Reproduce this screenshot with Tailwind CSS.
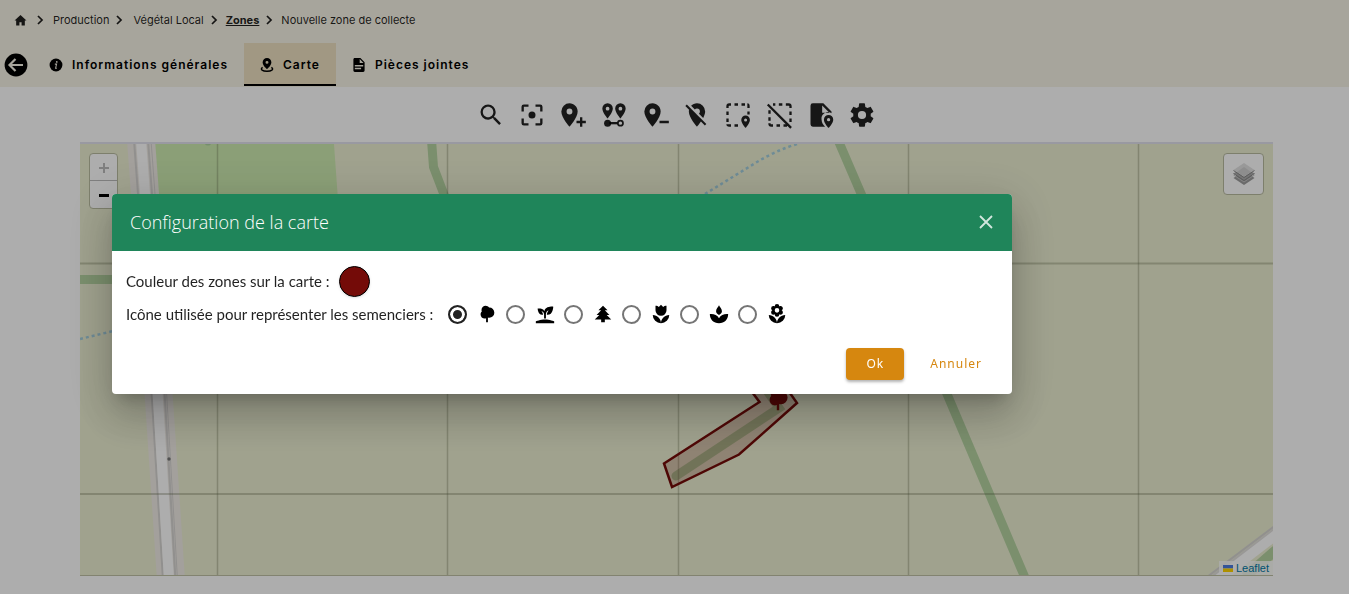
<!DOCTYPE html>
<html lang="fr">
<head>
    <meta charset="UTF-8">
    <meta name="viewport" content="width=device-width, initial-scale=1.0">
    <title>Nouvelle zone de collecte</title>
    <script src="https://cdn.jsdelivr.net/npm/@tailwindcss/browser@4"></script>
</head>
<body class="bg-white min-h-screen flex flex-col font-['Inter',sans-serif] text-black">

<header class="bg-[#f7f3e6] h-[87px]">
    <nav aria-label="Fil d'Ariane" class="h-10 pl-[14px] flex items-center text-[11px] text-black/87">
        <a href="#" aria-label="Accueil">
            <svg class="w-[13px] h-[13px]" viewBox="0 0 24 24" fill="currentColor"><path d="M10,21V15H14V21H20V12H23L12,2L1,12H4V21H10Z"/></svg>
        </a>
        <svg class="w-3 h-3 mx-[7px]" viewBox="0 0 24 24" fill="none" stroke="currentColor" stroke-width="3.5"><path d="M8 4L16 12L8 20"/></svg>
        <a href="#">Production</a>
        <svg class="w-3 h-3 mx-1" viewBox="0 0 24 24" fill="none" stroke="currentColor" stroke-width="3.5"><path d="M8 4L16 12L8 20"/></svg>
        <a href="#" class="ml-1">Végétal Local</a>
        <svg class="w-3 h-3 mx-1" viewBox="0 0 24 24" fill="none" stroke="currentColor" stroke-width="3.5"><path d="M8 4L16 12L8 20"/></svg>
        <a href="#" class="ml-[2px] font-bold underline">Zones</a>
        <svg class="w-3 h-3 mx-1" viewBox="0 0 24 24" fill="none" stroke="currentColor" stroke-width="3.5"><path d="M8 4L16 12L8 20"/></svg>
        <span class="ml-[2px]">Nouvelle zone de collecte</span>
    </nav>

    <div class="mt-[3px] h-[43px] flex items-stretch text-[12px] font-semibold tracking-[1px]">
        <button type="button" aria-label="Retour" class="ml-1 mr-[5px]">
            <svg class="w-6 h-6" viewBox="0 0 24 24"><circle cx="12" cy="12" r="11.4"/><path d="M19 12H6M11.500 6L5.500 12L11.500 18" fill="none" stroke="#f7f3e6" stroke-width="2.200"/></svg>
        </button>
        <a href="#" class="px-4 flex items-center gap-[9px]">
            <svg class="w-[14px] h-[14px]" viewBox="0 0 24 24"><circle cx="12" cy="12" r="11"/><path d="M10 10.500H13L11.300 17.500H13.500" fill="none" stroke="#f7f3e6" stroke-width="1.800"/><circle cx="13.300" cy="6.700" r="1.500" fill="#f7f3e6"/></svg>
            Informations générales
        </a>
        <a href="#" class="px-4 pt-[2px] flex items-center gap-[9px] bg-[#ede0c1] border-b-2 border-black">
            <svg class="w-[14px] h-[14px]" viewBox="0 0 24 24"><path fill-rule="evenodd" d="M12 0A7.500 7.500 0 0 1 19.500 7.500C19.500 12.500 12 19 12 19S4.500 12.500 4.500 7.500A7.500 7.500 0 0 1 12 0ZM12 5A2.500 2.500 0 0 0 12 10A2.500 2.500 0 0 0 12 5Z"/><path d="M4.500 16C-1 20 5 22.700 12 22.700S25 20 19.500 16" fill="none" stroke="#000" stroke-width="2.400"/></svg>
            Carte
        </a>
        <a href="#" class="px-4 flex items-center gap-[9px]">
            <svg class="w-[14px] h-[14px]" viewBox="2 2 20 20"><path d="M13,9H18.5L13,3.5V9M6,2H14L20,8V20A2,2 0 0,1 18,22H6C4.89,22 4,21.1 4,20V4C4,2.89 4.89,2 6,2M15,18V16H6V18H15M18,14V12H6V14H18Z"/></svg>
            Pièces jointes
        </a>
    </div>
</header>

<main class="flex-1 flex flex-col pl-20 pr-[76px] pb-[18px]">
    <!-- barre d'outils de la carte -->
    <div class="h-[55px] mx-auto w-[400px] flex items-center justify-between text-black/87">
        <button type="button" aria-label="Rechercher"><svg class="w-7 h-7" viewBox="0 0 24 24" fill="currentColor"><path d="M9.5,3A6.5,6.5 0 0,1 16,9.5C16,11.11 15.41,12.59 14.44,13.73L14.71,14H15.5L20.5,19L19,20.5L14,15.5V14.71L13.73,14.44C12.59,15.41 11.11,16 9.5,16A6.5,6.5 0 0,1 3,9.5A6.5,6.5 0 0,1 9.5,3M9.5,5C7,5 5,7 5,9.5C5,12 7,14 9.5,14C12,14 14,12 14,9.5C14,7 12,5 9.5,5Z"/></svg></button>
        <button type="button" aria-label="Centrer"><svg class="w-7 h-7" viewBox="0 0 24 24" fill="currentColor"><path d="M12,9A3,3 0 0,0 9,12A3,3 0 0,0 12,15A3,3 0 0,0 15,12A3,3 0 0,0 12,9M19,19H15V21H19A2,2 0 0,0 21,19V15H19M19,3H15V5H19V9H21V5A2,2 0 0,0 19,3M5,5H9V3H5A2,2 0 0,0 3,5V9H5M5,15H3V19A2,2 0 0,0 5,21H9V19H5V15Z"/></svg></button>
        <button type="button" aria-label="Ajouter un point"><svg class="w-7 h-7" viewBox="0 0 24 24" fill="currentColor"><path d="M9,11.5A2.5,2.5 0 0,0 11.5,9A2.5,2.5 0 0,0 9,6.5A2.5,2.5 0 0,0 6.5,9A2.5,2.5 0 0,0 9,11.5M9,2C12.86,2 16,5.13 16,9C16,14.25 9,22 9,22C9,22 2,14.25 2,9A7,7 0 0,1 9,2M15,17H18V14H20V17H23V19H20V22H18V19H15V17Z"/></svg></button>
        <button type="button" aria-label="Relier les points">
            <svg class="w-7 h-7" viewBox="0 0 24 24" fill="currentColor">
                <path fill-rule="evenodd" d="M6.500 2A4.500 4.500 0 0 1 11 6.500C11 10 6.500 15 6.500 15S2 10 2 6.500A4.500 4.500 0 0 1 6.500 2ZM6.500 5A1.600 1.600 0 0 0 6.500 8.200A1.600 1.600 0 0 0 6.500 5ZM17.500 2A4.500 4.500 0 0 1 22 6.500C22 10 17.500 15 17.500 15S13 10 13 6.500A4.500 4.500 0 0 1 17.500 2ZM17.500 5A1.600 1.600 0 0 0 17.500 8.200A1.600 1.600 0 0 0 17.500 5Z"/>
                <circle cx="6.500" cy="19" r="3"/><path d="M8 18H15V20H8Z"/><circle cx="17.500" cy="19" r="2.200" fill="none" stroke="currentColor" stroke-width="1.500"/>
            </svg>
        </button>
        <button type="button" aria-label="Supprimer un point"><svg class="w-7 h-7" viewBox="0 0 24 24" fill="currentColor"><path d="M9,11.5A2.5,2.5 0 0,0 11.5,9A2.5,2.5 0 0,0 9,6.5A2.5,2.5 0 0,0 6.5,9A2.5,2.5 0 0,0 9,11.5M9,2C12.86,2 16,5.13 16,9C16,14.25 9,22 9,22C9,22 2,14.25 2,9A7,7 0 0,1 9,2M15,17H23V19H15V17Z"/></svg></button>
        <button type="button" aria-label="Masquer les points"><svg class="w-7 h-7" viewBox="0 0 24 24" fill="currentColor"><path d="M16.37,16.1L11.75,11.47L11.64,11.36L3.27,3L2,4.27L5.18,7.45C5.06,7.95 5,8.46 5,9C5,14.25 12,22 12,22C12,22 13.67,20.15 15.37,17.65L18.73,21L20,19.72M12,6.5A2.5,2.5 0 0,1 14.5,9C14.5,9.73 14.17,10.39 13.67,10.85L17.3,14.5C18.28,12.62 19,10.68 19,9A7,7 0 0,0 12,2C10,2 8.24,2.82 6.96,4.14L10.15,7.33C10.61,6.82 11.26,6.5 12,6.5Z"/></svg></button>
        <button type="button" aria-label="Tracer une zone">
            <svg class="w-7 h-7" viewBox="0 0 24 24" fill="currentColor">
                <path d="M3 6V4.500Q3 3 4.500 3H6M9 3H12M15 3H18M20 3Q21 3 21 4.500V6M21 9V11.500M3 9V12M3 15V18M3 20Q3 21 4.500 21H6M9 21H12" fill="none" stroke="currentColor" stroke-width="2"/>
                <path fill-rule="evenodd" d="M18.500 12.500A3.700 3.700 0 0 1 22.200 16.200C22.200 19 18.500 23 18.500 23S14.800 19 14.800 16.200A3.700 3.700 0 0 1 18.500 12.500ZM18.500 14.900A1.300 1.300 0 0 0 18.500 17.500A1.300 1.300 0 0 0 18.500 14.900Z"/>
            </svg>
        </button>
        <button type="button" aria-label="Effacer la zone">
            <svg class="w-7 h-7" viewBox="0 0 24 24" fill="none" stroke="currentColor" stroke-width="2">
                <path d="M6 3H8M11 3H14M17 3H19.500Q21 3 21 4.500V6M21 9V12M21 15V18M3 8V11M3 14V17M3 19V19.500Q3 21 4.500 21H6M9 21H12M15 21H18M1.500 3L21.500 23"/>
            </svg>
        </button>
        <button type="button" aria-label="Importer un fichier">
            <svg class="w-7 h-7" viewBox="0 0 24 24" fill="currentColor">
                <path fill-rule="evenodd" d="M5 2H14L21 9V10.500A5.500 5.500 0 0 0 12.500 16C12.500 18.500 14 20.500 15.500 22H5A2 2 0 0 1 3 20V4A2 2 0 0 1 5 2ZM13 3.800V10H19.200Z"/>
                <path fill-rule="evenodd" d="M18.500 12A4 4 0 0 1 22.500 16C22.500 19 18.500 23 18.500 23S14.500 19 14.500 16A4 4 0 0 1 18.500 12ZM18.500 14.600A1.400 1.400 0 0 0 18.500 17.400A1.400 1.400 0 0 0 18.500 14.600Z"/>
            </svg>
        </button>
        <button type="button" aria-label="Configuration"><svg class="w-7 h-7" viewBox="0 0 24 24" fill="currentColor"><path d="M12,15.5A3.5,3.5 0 0,1 8.5,12A3.5,3.5 0 0,1 12,8.5A3.5,3.5 0 0,1 15.5,12A3.5,3.5 0 0,1 12,15.5M19.43,12.97C19.47,12.65 19.5,12.33 19.5,12C19.5,11.67 19.47,11.34 19.43,11L21.54,9.37C21.73,9.22 21.78,8.95 21.66,8.73L19.66,5.27C19.54,5.05 19.27,4.96 19.05,5.05L16.56,6.05C16.04,5.66 15.5,5.32 14.87,5.07L14.5,2.42C14.46,2.18 14.25,2 14,2H10C9.75,2 9.54,2.18 9.5,2.42L9.13,5.07C8.5,5.32 7.96,5.66 7.44,6.05L4.95,5.05C4.73,4.96 4.46,5.05 4.34,5.27L2.34,8.73C2.21,8.95 2.27,9.22 2.46,9.37L4.57,11C4.53,11.34 4.5,11.67 4.5,12C4.5,12.33 4.53,12.65 4.57,12.97L2.46,14.63C2.27,14.78 2.21,15.05 2.34,15.27L4.34,18.73C4.46,18.95 4.73,19.03 4.95,18.95L7.44,17.94C7.96,18.34 8.5,18.68 9.13,18.93L9.5,21.58C9.54,21.82 9.75,22 10,22H14C14.25,22 14.46,21.82 14.5,21.58L14.87,18.93C15.5,18.67 16.04,18.34 16.56,17.94L19.05,18.95C19.27,19.03 19.54,18.95 19.66,18.73L21.66,15.27C21.78,15.05 21.73,14.78 21.54,14.63L19.43,12.97Z"/></svg></button>
    </div>

    <!-- carte -->
    <div class="relative flex-1 overflow-hidden bg-[#ecefd2] border-t-2 border-t-[#e2e2ee] border-b border-b-[#c0c2a6]">
        <svg class="absolute inset-0 w-full h-full" viewBox="80 144 1193 431" preserveAspectRatio="xMinYMin slice" fill="none">
            <path d="M154 144H334L338 200V260H162Z" fill="#cdebb0"/>
            <circle cx="208" cy="142" r="3.500" fill="#aed1a0"/>
            <g stroke="#b5d3a1" stroke-width="9">
                <path d="M431.500 140L433.500 167L448 205"/>
                <path d="M80 279.500H130"/>
                <path d="M838 140L866 205L947 394L1026 580"/>
                <path d="M765 388L779 408L676 476" stroke-linecap="round"/>
                <path d="M1245 577L1276 550" stroke-width="10"/>
            </g>
            <!-- routes -->
            <path d="M141 140L145 194L159 400L171 580" stroke="#f0ece6" stroke-width="28"/>
            <path d="M134 140L138 194L152 400L163 580M148 140L152 194L165 400L175.500 580" stroke="#d6d4d2" stroke-width="2"/>
            <path d="M151 140L155 194L167 400L177.500 580" stroke="#d6d4d2" stroke-width="1"/>
            <path d="M141 140L145 194L158 400L169 580" stroke="#fff" stroke-width="10"/>
            <path d="M1203 580L1276 525" stroke="#d6d4d2" stroke-width="2"/>
            <path d="M1206 582L1276 529" stroke="#e2e0de" stroke-width="4"/>
            <path d="M1212 584L1276 535" stroke="#fff" stroke-width="10"/>
            <circle cx="169" cy="459" r="1.700" fill="#777"/>
            <path d="M705 194L757 162Q775 151 797 144M80 339L130 327" stroke="#a3cede" stroke-width="2.500" stroke-dasharray="3 3"/>
            <!-- quadrillage -->
            <g stroke="#5c6244" stroke-opacity=".3" stroke-width="1.500">
                <path d="M217.500 144V580M447.500 144V580M678.500 144V580M908.500 144V580M1138.500 144V580"/>
                <path d="M80 263.500H1273M80 494H1273" stroke-width="2"/>
            </g>
            <path d="M740 376L759.500 402L664 463.500L672 487L739 454.500L797 403L778 376Z" fill="#740b08" fill-opacity=".2" stroke="#740b08" stroke-width="2.500"/>
            <path transform="translate(763.600 385) scale(1.200)" fill="#740b08" d="M11,21V16.74C10.53,16.91 10.03,17 9.5,17C7,17 5,15 5,12.5C5,11.23 5.5,10.09 6.36,9.27C6.13,8.73 6,8.13 6,7.5C6,5 8,3 10.5,3C12.06,3 13.44,3.8 14.25,5C14.33,5 14.41,5 14.5,5A5.5,5.5 0 0,1 20,10.5A5.5,5.5 0 0,1 14.5,16C14,16 13.5,15.93 13,15.79V21H11Z"/>
        </svg>

        <div class="absolute left-[9px] top-[9px] w-[29px] rounded-sm border border-[#b9bca0] bg-white overflow-hidden">
            <button type="button" aria-label="Zoom avant" disabled class="w-full h-[27px] pt-[2px] flex items-center justify-center border-b border-[#bbb] text-[#bbb]"><svg class="w-[10px] h-[10px]" viewBox="0 0 10 10" stroke="currentColor" stroke-width="2"><path d="M0 5H10M5 0V10"/></svg></button>
            <button type="button" aria-label="Zoom arrière" class="w-full h-[27px] flex items-center justify-center"><svg class="w-[10px] h-[10px]" viewBox="0 0 10 10" stroke="currentColor" stroke-width="3"><path d="M0 5.500H10"/></svg></button>
        </div>

        <button type="button" aria-label="Couches" class="absolute right-[9px] top-[9px] w-[41px] h-[42px] rounded border border-[#b9bca0] bg-white flex items-center justify-center">
            <svg class="w-[26px] h-[26px]" viewBox="0 0 26 26">
                <path d="M13 10L23.500 17L13 24L2.500 17Z" fill="#9c9c9c"/>
                <path d="M2.500 14L13 21L23.500 14" fill="none" stroke="#c4c4c4"/>
                <path d="M13 6L23.500 12.500L13 19.500L2.500 12.500Z" fill="#ababab"/>
                <path d="M2.500 12.500L13 19.500L23.500 12.500" fill="none" stroke="#8a8a8a"/>
                <path d="M13 2L23.500 9L13 16L2.500 9Z" fill="#e2e2e2"/>
                <path d="M13 6L20 11L13 15.500L6 11Z" fill="#d0d0d0"/>
                <path d="M2.500 9.500L13 16.500L23.500 9.500" fill="none" stroke="#8a8a8a"/>
            </svg>
        </button>

        <div class="absolute right-0 bottom-0 h-[14px] px-1 flex items-center gap-[3px] bg-white/80 font-['Liberation_Sans',sans-serif] text-[11px]">
            <svg class="w-[10px] h-[7px]" viewBox="0 0 10 7"><path fill="#4C7BE1" d="M0 0H10V3.500H0Z"/><path fill="#FFD500" d="M0 3.500H10V7H0Z"/></svg>
            <a href="#" class="text-[#0078a8]">Leaflet</a>
        </div>
    </div>
</main>

<!-- fenêtre de configuration -->
<div class="fixed inset-0 bg-black/32 pl-28 pr-6 pb-[6px] flex items-center font-['Open_Sans','Noto_Sans',sans-serif]">
    <div role="dialog" aria-labelledby="dialog-title" class="w-full max-w-[900px] rounded bg-white text-black/87 shadow-[0_11px_15px_-7px_rgba(0,0,0,0.2),0_24px_38px_3px_rgba(0,0,0,0.14),0_9px_46px_8px_rgba(0,0,0,0.12)]">
        <div class="h-[57px] px-[18px] rounded-t bg-[#1f855a] text-white flex items-center justify-between">
            <h2 id="dialog-title" class="text-[18px] font-light">Configuration de la carte</h2>
            <button type="button" aria-label="Fermer" class="text-white/80"><svg class="w-4 h-4" viewBox="0 0 16 16" fill="none" stroke="currentColor" stroke-width="1.800"><path d="M2 1L14 13M14 1L2 13"/></svg></button>
        </div>
        <form class="px-[14px] pt-[15px] pb-[14px]">
            <div class="flex items-center">
                <label for="zone-color" class="w-[213px] whitespace-nowrap font-['Lato',sans-serif] text-[15px]">Couleur des zones sur la carte :</label>
                <button type="button" id="zone-color" class="w-[31px] h-[31px] rounded-full border border-black bg-[#740b08] shadow"></button>
            </div>
            <fieldset class="mt-[6px] h-[22px] flex items-center">
                <legend class="float-left w-[322px] whitespace-nowrap font-['Lato',sans-serif] text-[15px]">Icône utilisée pour représenter les semenciers :</legend>
                <div class="flex items-center gap-2">
                    <label class="flex items-center gap-[9px]">
                        <input type="radio" name="icone" aria-label="Arbre" checked class="appearance-none w-[19px] h-[19px] rounded-full border-2 border-[#757575] checked:border-[#222] checked:bg-[#222] checked:shadow-[inset_0_0_0_3px_#fff]">
                        <svg class="w-[22px] h-[22px]" viewBox="0 0 24 24"><path d="M11,21V16.74C10.53,16.91 10.03,17 9.5,17C7,17 5,15 5,12.5C5,11.23 5.5,10.09 6.36,9.27C6.13,8.73 6,8.13 6,7.5C6,5 8,3 10.5,3C12.06,3 13.44,3.8 14.25,5C14.33,5 14.41,5 14.5,5A5.5,5.5 0 0,1 20,10.5A5.5,5.5 0 0,1 14.5,16C14,16 13.5,15.93 13,15.79V21H11Z"/></svg>
                    </label>
                    <label class="flex items-center gap-[9px]">
                        <input type="radio" name="icone" aria-label="Pousse" class="appearance-none w-[19px] h-[19px] rounded-full border-2 border-[#757575] checked:border-[#222] checked:bg-[#222] checked:shadow-[inset_0_0_0_3px_#fff]">
                        <svg class="w-[22px] h-[22px]" viewBox="0 0 24 24"><path d="M2,22V20C2,20 7,18 12,18C17,18 22,20 22,20V22H2M11.3,9.1C10.1,5.2 4,6.1 4,6.1C4,6.1 4.2,13.9 9.9,12.7C9.5,9.8 8,9 8,9C10.8,9 11,12.4 11,12.4V17C11.3,17 11.7,17 12,17C12.3,17 12.7,17 13,17V12.8C13,12.8 13,8.9 16,7.9C16,7.9 14,10.9 14,12.9C21,13.6 21,4 21,4C21,4 12.1,3 11.3,9.1Z"/></svg>
                    </label>
                    <label class="flex items-center gap-[9px]">
                        <input type="radio" name="icone" aria-label="Sapin" class="appearance-none w-[19px] h-[19px] rounded-full border-2 border-[#757575] checked:border-[#222] checked:bg-[#222] checked:shadow-[inset_0_0_0_3px_#fff]">
                        <svg class="w-[22px] h-[22px]" viewBox="0 0 24 24"><path d="M10,21V18H3L8,13H5L10,8H7L12,3L17,8H14L19,13H16L21,18H14V21H10Z"/></svg>
                    </label>
                    <label class="flex items-center gap-[9px]">
                        <input type="radio" name="icone" aria-label="Tulipe" class="appearance-none w-[19px] h-[19px] rounded-full border-2 border-[#757575] checked:border-[#222] checked:bg-[#222] checked:shadow-[inset_0_0_0_3px_#fff]">
                        <svg class="w-[22px] h-[22px]" viewBox="0 0 24 24"><path d="M3,13A9,9 0 0,0 12,22C12,17 7.97,13 3,13M12,22A9,9 0 0,0 21,13C16,13 12,17 12,22M18,3V8A6,6 0 0,1 12,14A6,6 0 0,1 6,8V3C6.74,3 7.47,3.12 8.16,3.39C8.71,3.62 9.2,3.96 9.61,4.39L12,2L14.39,4.39C14.8,3.96 15.29,3.62 15.84,3.39C16.53,3.12 17.26,3 18,3Z"/></svg>
                    </label>
                    <label class="flex items-center gap-[9px]">
                        <input type="radio" name="icone" aria-label="Lotus" class="appearance-none w-[19px] h-[19px] rounded-full border-2 border-[#757575] checked:border-[#222] checked:bg-[#222] checked:shadow-[inset_0_0_0_3px_#fff]">
                        <svg class="w-[22px] h-[22px]" viewBox="0 0 24 24"><path d="M12 2.500C13 4.500 15.200 6.500 15.200 9C15.200 11 13.500 12 12 13C10.500 12 8.800 11 8.800 9C8.800 6.500 11 4.500 12 2.500ZM2 12C6 11.500 10 13 12 16.500C14 13 18 11.500 22 12C22 18 18 22 12 22S2 18 2 12Z"/></svg>
                    </label>
                    <label class="flex items-center gap-[9px]">
                        <input type="radio" name="icone" aria-label="Fleur" class="appearance-none w-[19px] h-[19px] rounded-full border-2 border-[#757575] checked:border-[#222] checked:bg-[#222] checked:shadow-[inset_0_0_0_3px_#fff]">
                        <svg class="w-[22px] h-[22px]" viewBox="0 0 24 24"><path d="M3,13A9,9 0 0,0 12,22C12,17 7.97,13 3,13M12,5.5A2.5,2.5 0 0,1 14.5,8A2.5,2.5 0 0,1 12,10.5A2.5,2.5 0 0,1 9.5,8A2.5,2.5 0 0,1 12,5.5M5.6,10.25A2.5,2.5 0 0,0 8.1,12.75C8.63,12.75 9.12,12.58 9.5,12.31C9.5,12.37 9.5,12.43 9.5,12.5A2.5,2.5 0 0,0 12,15A2.5,2.5 0 0,0 14.5,12.5C14.5,12.43 14.5,12.37 14.5,12.31C14.88,12.58 15.37,12.75 15.9,12.75C17.28,12.75 18.4,11.63 18.4,10.25C18.4,9.25 17.81,8.4 16.97,8C17.81,7.6 18.4,6.74 18.4,5.75C18.4,4.37 17.28,3.25 15.9,3.25C15.37,3.25 14.88,3.41 14.5,3.69C14.5,3.63 14.5,3.56 14.5,3.5A2.5,2.5 0 0,0 12,1A2.5,2.5 0 0,0 9.5,3.5C9.5,3.56 9.5,3.63 9.5,3.69C9.12,3.41 8.63,3.25 8.1,3.25A2.5,2.5 0 0,0 5.6,5.75C5.6,6.74 6.19,7.6 7.03,8C6.19,8.4 5.6,9.25 5.6,10.25M12,22A9,9 0 0,0 21,13C16,13 12,17 12,22Z"/></svg>
                    </label>
                </div>
            </fieldset>
            <div class="mt-[23px] flex justify-end gap-[10px] font-['Noto_Sans',sans-serif] text-[12px] tracking-[1px]">
                <button type="button" class="h-8 px-5 rounded bg-[#d6870f] text-white shadow-[0_2px_3px_rgba(0,0,0,0.3)]">Ok</button>
                <button type="button" class="h-8 px-4 rounded text-[#d6870f]">Annuler</button>
            </div>
        </form>
    </div>
</div>

</body>
</html>
